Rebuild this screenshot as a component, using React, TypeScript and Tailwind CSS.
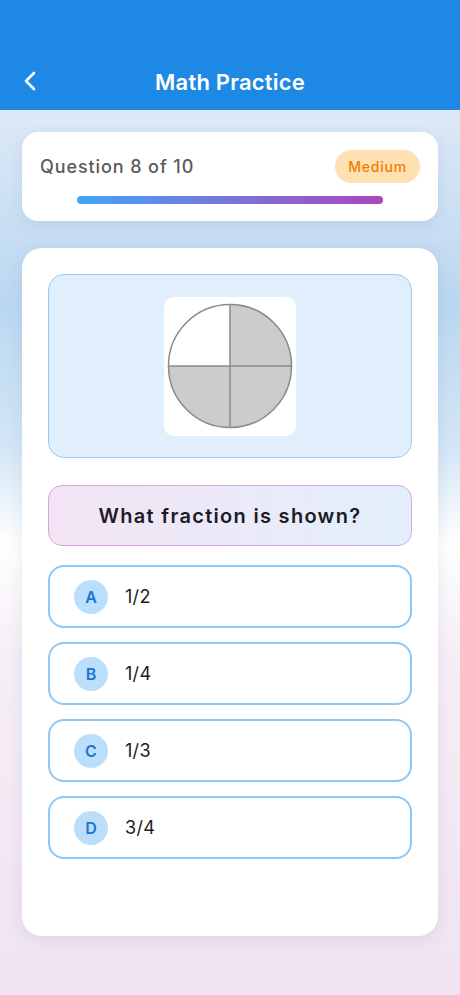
import React from "react";

const options = [
  { l: "A", t: "1/2" },
  { l: "B", t: "1/4" },
  { l: "C", t: "1/3" },
  { l: "D", t: "3/4" },
];

export default function App() {
  return (
    <div
      className="w-[460px] h-[995px] flex flex-col overflow-hidden"
      style={{ fontFamily: "Inter, 'Noto Sans', sans-serif" }}
    >
      <div className="h-[110px] bg-[#1e88e5] flex items-end pb-[11px] relative shrink-0">
        <div className="w-full flex items-center justify-center h-[34px] relative">
          <svg
            className="absolute left-[21px] top-[5px]"
            width="20"
            height="22"
            viewBox="0 0 20 22"
            fill="none"
            stroke="white"
            strokeWidth="2.6"
            strokeLinecap="round"
            strokeLinejoin="round"
          >
            <path d="M13 3 L5 11 L13 19" />
          </svg>
          <span className="text-white text-[22px] font-semibold tracking-[0.2px]">Math Practice</span>
        </div>
      </div>

      <div className="flex-1 flex flex-col px-[22px] pt-[22px] pb-[59px] bg-[linear-gradient(180deg,#dde9f6_0%,#bad7f0_22%,#d3e6f6_38%,#ffffff_49%,#f6eef6_62%,#efe3f1_100%)]">
        <div className="bg-white rounded-[16px] h-[89px] px-[18px] pt-[18px] shadow-[0_4px_14px_rgba(80,110,150,0.12)] shrink-0">
          <div className="flex items-center justify-between">
            <span className="text-[18px] font-medium text-[#5a5a5a] tracking-[0.9px]">Question 8 of 10</span>
            <span className="bg-[#ffe0b2] text-[#f57c00] text-[14px] font-medium rounded-full h-[33px] px-[13px] flex items-center tracking-[0.8px]">
              Medium
            </span>
          </div>
          <div className="mt-[13px] mx-auto w-[306px] h-[8px] rounded-full bg-[linear-gradient(90deg,#42a5f5,#ab47bc)]" />
        </div>

        <div className="mt-[27px] flex-1 bg-white rounded-[20px] px-[26px] pt-[26px] shadow-[0_4px_16px_rgba(80,110,150,0.12)]">
          <div className="h-[184px] rounded-[16px] border border-[#9ccbf2] bg-[#e1eefb] flex items-center justify-center">
            <div className="w-[132px] h-[139px] bg-white rounded-[10px] flex items-center justify-center">
              <svg width="126" height="126" viewBox="0 0 126 126">
                <path d="M63 63 L63 1.5 A61.5 61.5 0 0 1 124.5 63 Z" fill="#cccccc" />
                <path d="M63 63 L124.5 63 A61.5 61.5 0 0 1 63 124.5 Z" fill="#cccccc" />
                <path d="M63 63 L63 124.5 A61.5 61.5 0 0 1 1.5 63 Z" fill="#cccccc" />
                <path d="M63 63 L1.5 63 A61.5 61.5 0 0 1 63 1.5 Z" fill="#ffffff" />
                <circle cx="63" cy="63" r="61.5" fill="none" stroke="#8a8a8a" strokeWidth="1.5" />
                <line x1="63" y1="1.5" x2="63" y2="124.5" stroke="#8a8a8a" strokeWidth="1.5" />
                <line x1="1.5" y1="63" x2="124.5" y2="63" stroke="#8a8a8a" strokeWidth="1.5" />
              </svg>
            </div>
          </div>

          <div className="mt-[27px] h-[61px] rounded-[14px] border border-[#d7a6de] bg-[linear-gradient(90deg,#f3e4f4,#e3effc)] flex items-center justify-center">
            <span className="text-[20px] font-semibold text-[#1c1c28] tracking-[1.3px]">What fraction is shown?</span>
          </div>

          <div className="mt-[19px] flex flex-col gap-[14px]">
            {options.map((o) => (
              <div
                key={o.l}
                className="h-[63px] rounded-[16px] border-2 border-[#90c7f3] flex items-center pl-[24px]"
              >
                <div className="w-[34px] h-[34px] rounded-full bg-[#bbdefb] flex items-center justify-center text-[#1976d2] text-[16px] font-semibold">
                  {o.l}
                </div>
                <span className="ml-[17px] text-[18px] text-[#1c1c1c] tracking-[0.3px]">{o.t}</span>
              </div>
            ))}
          </div>
        </div>
      </div>
    </div>
  );
}
